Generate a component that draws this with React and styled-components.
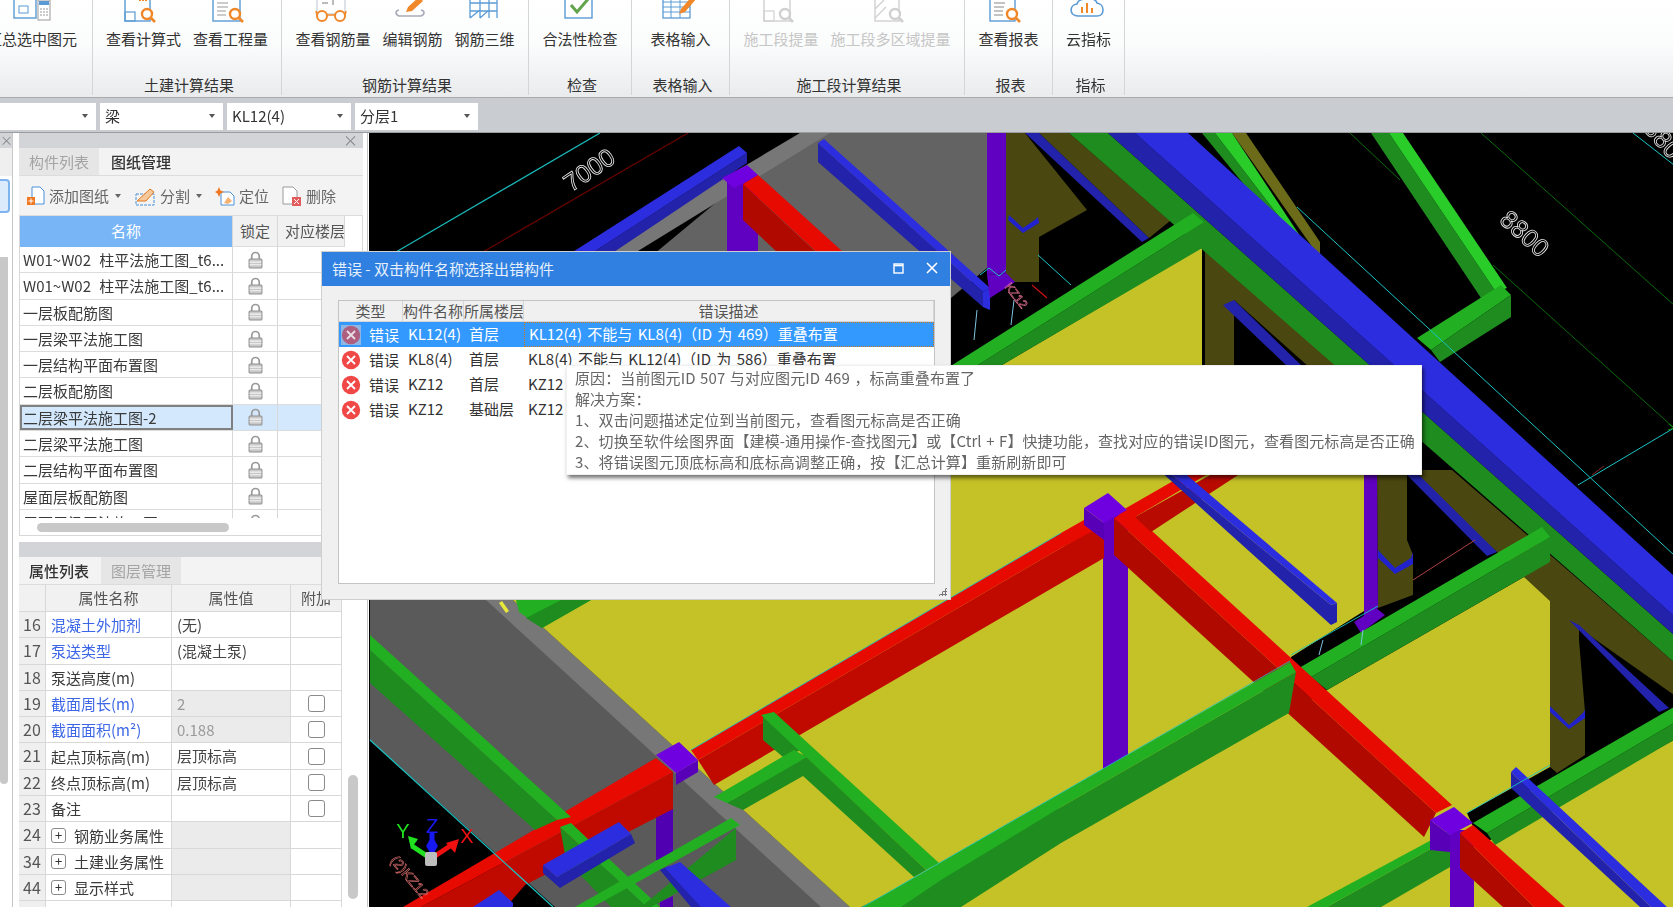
import React from 'react';
import styled, { createGlobalStyle } from 'styled-components';

const GlobalStyle = createGlobalStyle`
  html, body { margin: 0; padding: 0; background: #fff; overflow: hidden; }
  body { font-family: "Noto Sans CJK SC", "Noto Sans", sans-serif; font-size: 15px; color: #333; }
`;

const Page = styled.div`
  position: relative;
  width: 1673px;
  height: 907px;
  overflow: hidden;
  display: flex;
  flex-direction: column;
  filter: blur(0.3px);
`;

/* ---------- ribbon ---------- */
const Ribbon = styled.div`
  height: 97px;
  flex: none;
  display: flex;
  background: linear-gradient(#fff 0%, #fbfcfc 45%, #e9ebed 100%);
  border-bottom: 1px solid #a9abad;
`;
const Group = styled.div`
  flex: none;
  width: ${p => p.$w}px;
  height: 95px;
  display: flex;
  flex-direction: column;
  border-right: ${p => (p.$last ? 'none' : '1px solid #d3d5d7')};
  box-sizing: border-box;
`;
const GroupItems = styled.div`
  flex: 1;
  display: flex;
  gap: 12px;
  justify-content: ${p => p.$align || 'center'};
  padding-right: ${p => p.$pr || 0}px;
`;
const Item = styled.div`
  display: flex;
  flex-direction: column;
  align-items: center;
  white-space: nowrap;
  color: ${p => (p.$off ? '#c6c6c6' : '#333')};
`;
const IconSlot = styled.div`
  height: 29px;
  display: flex;
  align-items: flex-end;
  padding-bottom: 5px;
  box-sizing: border-box;
  overflow: hidden;
`;
const ItemLabel = styled.div`
  line-height: 20px;
`;
const GroupTitle = styled.div`
  height: 20px;
  line-height: 20px;
  padding-left: 4px;
  text-align: center;
  color: #333;
`;

/* ---------- combo bar ---------- */
const ComboBar = styled.div`
  height: 35px;
  flex: none;
  background: #c9ccd1;
  border-bottom: 1px solid #9a9c9f;
  box-sizing: border-box;
  display: flex;
  gap: 4px;
  padding-top: 5px;
  margin-left: -1px;
`;
const Combo = styled.div`
  width: ${p => p.$w}px;
  height: 27px;
  background: #fff;
  display: flex;
  align-items: center;
  padding: 0 8px 2px 5px;
  box-sizing: border-box;
  justify-content: space-between;
`;
const Caret = styled.span`
  width: 0;
  height: 0;
  border-left: 3.5px solid transparent;
  border-right: 3.5px solid transparent;
  border-top: 4px solid #555;
`;

/* ---------- left side ---------- */
const Main = styled.div`
  flex: 1;
  display: flex;
  min-height: 0;
`;
const Stub = styled.div`
  width: 12px;
  flex: none;
  border-right: 1px solid #c8c8c8;
  background: #fff;
  display: flex;
  flex-direction: column;
`;
const StubHead = styled.div`
  height: 15px;
  background: #d2d4d8;
  color: #888;
  font-size: 13px;
  line-height: 14px;
`;
const StubTabs = styled.div`
  height: 28px;
  background: #efefef;
`;
const StubBtn = styled.div`
  width: 10px;
  height: 34px;
  margin-top: 3px;
  box-sizing: border-box;
  border: 2px solid #7db4ee;
  border-left: none;
  border-radius: 0 4px 4px 0;
  background: #dcebfb;
`;
const StubThumb = styled.div`
  width: 8px;
  height: 527px;
  margin-top: 44px;
  background: #c8c8c8;
  border-radius: 0 0 4px 4px;
`;
const Side = styled.div`
  width: 349px;
  flex: none;
  margin-left: 6px;
  display: flex;
  flex-direction: column;
  position: relative;
`;
const PanelStrip = styled.div`
  height: 15px;
  flex: none;
  width: 344px;
  background: #d2d4d8;
  color: #8a8a8a;
  font-size: 15px;
  line-height: 14px;
  text-align: right;
  padding-right: 5px;
  box-sizing: border-box;
`;
const Tabs = styled.div`
  height: 28px;
  flex: none;
  width: 344px;
  display: flex;
  gap: 2px;
  background: #f3f3f3;
  border-bottom: 1px solid #dcdcdc;
  box-sizing: border-box;
`;
const Tab = styled.div`
  width: 80px;
  text-align: center;
  line-height: 27px;
  background: ${p => (p.$on ? '#f3f3f3' : '#e6e6e6')};
  color: ${p => (p.$on ? '#333' : '#a4a4a4')};
  font-weight: ${p => (p.$on ? 500 : 400)};
`;
const Toolbar = styled.div`
  height: 40px;
  flex: none;
  width: 344px;
  background: #f3f3f3;
  border-bottom: 1px solid #dcdcdc;
  box-sizing: border-box;
  display: flex;
  align-items: center;
  gap: 13px;
  padding-left: 8px;
  color: #666;
`;
const Tool = styled.div`
  display: flex;
  align-items: center;
  gap: 4px;
`;
const SmallCaret = styled(Caret)`
  border-top-color: #666;
  margin-left: 2px;
`;
const DrawingTable = styled.div`
  height: 320px;
  flex: none;
  width: 344px;
  box-sizing: border-box;
  border: 1px solid #d8d8d8;
  border-top: none;
  border-left-width: 1px;
  position: relative;
  overflow: hidden;
`;
const DrawingHead = styled.div`
  display: grid;
  grid-template-columns: 213px 45px 67px;
  height: 31px;
  line-height: 30px;
  text-align: center;
  color: #555;
`;
const HeadBlue = styled.div`
  background: #78b5f7;
  color: #fff;
  border-right: 1px solid #d8d8d8;
`;
const HeadCell = styled.div`
  background: #f1f1f1;
  border-bottom: 1px solid #dcdcdc;
  border-right: 1px solid #d8d8d8;
  white-space: nowrap;
  overflow: hidden;
  padding-left: ${p => p.$pl || 0}px;
`;
const DrawingRows = styled.div`
  height: 271px;
  overflow: hidden;
`;
const DrawingRow = styled.div`
  display: grid;
  grid-template-columns: 213px 45px 1fr;
  height: 26.3px;
  box-sizing: border-box;
  border-bottom: 1px solid #dcdcdc;
  background: ${p => (p.$on ? '#d3e8fc' : '#fff')};
`;
const NameCell = styled.div`
  padding-left: 3px;
  line-height: 25px;
  white-space: nowrap;
  overflow: hidden;
  word-spacing: 5px;
  border-right: 1px solid #d8d8d8;
  color: #3a3a3a;
  box-sizing: border-box;
  outline: ${p => (p.$on ? '2px solid #808080' : 'none')};
  outline-offset: -2px;
`;
const LockCell = styled.div`
  display: flex;
  align-items: center;
  justify-content: center;
  border-right: 1px solid #d8d8d8;
`;
const HScroll = styled.div`
  width: 192px;
  height: 9px;
  margin: 5px 0 0 17px;
  background: #c8c8c8;
  border-radius: 5px;
`;
const PanelGap = styled.div`
  height: 6px;
  flex: none;
`;
const PropHead = styled.div`
  display: grid;
  grid-template-columns: 27px 126px 119px 51px;
  height: 27px;
  line-height: 25px;
  text-align: center;
  color: #555;
  background: #f1f1f1;
  width: 323px;
  flex: none;
  & > div { border-right: 1px solid #d8d8d8; border-bottom: 1px solid #d8d8d8; }
`;
const PropRow = styled.div`
  display: grid;
  grid-template-columns: 27px 126px 119px 51px;
  height: 26.3px;
  width: 323px;
  flex: none;
  & > div {
    border-right: 1px solid #d8d8d8;
    border-bottom: 1px solid #d8d8d8;
    box-sizing: border-box;
    line-height: 25px;
    white-space: nowrap;
    overflow: hidden;
  }
`;
const NumCell = styled.div`
  background: #efefef;
  color: #555;
  text-align: center;
  font-size: 16px;
`;
const PropName = styled.div`
  padding-left: 5px;
  display: flex;
  align-items: center;
  gap: 8px;
  color: ${p => (p.$link ? '#3c66e6' : '#3a3a3a')};
`;
const PropValue = styled.div`
  padding-left: 5px;
  background: ${p => (p.$ro ? '#ebebeb' : '#fff')};
  color: ${p => (p.$muted ? '#9a9a9a' : '#444')};
`;
const CheckCell = styled.div`
  display: flex;
  align-items: center;
  justify-content: center;
`;
const CheckBox = styled.span`
  width: 17px;
  height: 17px;
  border: 1px solid #8a8a8a;
  border-radius: 3px;
  box-sizing: border-box;
`;
const Expander = styled.span`
  width: 15px;
  height: 15px;
  flex: none;
  border: 1px solid #8a8a8a;
  border-radius: 3px;
  box-sizing: border-box;
  font-size: 13px;
  line-height: 12px;
  text-align: center;
  color: #333;
`;
const VScroll = styled.div`
  position: absolute;
  left: 329px;
  top: 642px;
  width: 10px;
  height: 124px;
  background: #c8c8c8;
  border-radius: 5px;
`;
const SideEdge = styled.div`
  width: 1px;
  flex: none;
  background: #c4c4c4;
  margin-left: -1px;
`;

/* ---------- scene ---------- */
const SceneBox = styled.div`
  flex: 1;
  margin-left: 1px;
  background: #000;
  overflow: hidden;
  & > svg { display: block; }
`;

/* ---------- error dialog ---------- */
const Dialog = styled.div`
  position: absolute;
  left: 322px;
  top: 252px;
  width: 628px;
  height: 347px;
  background: #f0f0f0;
  box-shadow: 0 0 0 1px #cfcfcf;
  display: flex;
  flex-direction: column;
`;
const DialogTitle = styled.div`
  height: 34px;
  flex: none;
  background: #2f80e0;
  color: #e6f0fc;
  padding: 0 12px 2px 10px;
  box-sizing: border-box;
  display: flex;
  align-items: center;
  justify-content: space-between;
`;
const TitleButtons = styled.div`
  display: flex;
  align-items: center;
  gap: 22px;
`;
const ErrorTable = styled.div`
  margin: 14px 15px 0 16px;
  height: 284px;
  box-sizing: border-box;
  border: 1px solid #c4c4c4;
  background: #fff;
`;
const ErrorHead = styled.div`
  display: grid;
  grid-template-columns: 64px 61px 60px 1fr;
  height: 20px;
  line-height: 19px;
  text-align: center;
  background: #f0f0f0;
  border-bottom: 1px solid #d6d6d6;
  color: #555;
  white-space: nowrap;
  & > div { border-right: 1px solid #d6d6d6; overflow: hidden; }
`;
const ErrorRow = styled.div`
  display: grid;
  grid-template-columns: 64px 61px 60px 1fr;
  height: 25px;
  line-height: 24px;
  white-space: nowrap;
  background: ${p => (p.$on ? '#3399ff' : '#fff')};
  color: ${p => (p.$on ? '#fff' : '#333')};
`;
const TypeCell = styled.div`
  display: flex;
  align-items: center;
  gap: 8px;
  padding-left: 2px;
`;
const PlainCell = styled.div`
  padding-left: 5px;
`;
const DescCell = styled.div`
  padding-left: 4px;
  box-sizing: border-box;
  word-spacing: 2px;
  border: ${p => (p.$on ? '1px dotted #c87a1c' : 'none')};
  line-height: ${p => (p.$on ? '22px' : '24px')};
`;
const Grip = styled.div`
  position: absolute;
  right: 3px;
  bottom: 3px;
  width: 9px;
  height: 9px;
  background:
    radial-gradient(circle, #777 1.2px, transparent 1.4px) 0 0 / 3px 3px;
  clip-path: polygon(100% 0, 100% 100%, 0 100%);
`;

/* ---------- tooltip ---------- */
const Tip = styled.div`
  position: absolute;
  left: 566px;
  top: 365px;
  width: 856px;
  height: 110px;
  box-sizing: border-box;
  background: #fff;
  color: #666;
  padding: 1px 0 0 8px;
  line-height: 21px;
  letter-spacing: 0.1px;
  word-spacing: 1px;
  white-space: nowrap;
  box-shadow: 2px 3px 4px rgba(0, 0, 0, 0.55);
  border: 1px solid #f0f0f0;
`;

function RibbonIcon({ kind }) {
  const blue = '#5b9bd5';
  const orange = '#f0882a';
  const gray = '#d0d0d0';
  const mag = (c) => (
    <>
      <circle cx="23" cy="14" r="5" fill="#fff" stroke={c} strokeWidth="2.4" />
      <path d="M27 18l4 4" stroke={c} strokeWidth="2.6" />
    </>
  );
  let body = null;
  if (kind === 'sum') {
    body = (
      <>
        <rect x="1" y="-6" width="22" height="24" fill="none" stroke={blue} strokeWidth="1.4" />
        <rect x="6" y="6" width="9" height="7" fill="none" stroke={blue} />
        <rect x="25" y="0" width="12" height="20" fill="#fff" stroke="#999" />
        <rect x="26" y="1" width="10" height="4" fill={blue} />
        <path d="M27 9h8M27 12h8M27 15h8" stroke="#999" strokeDasharray="2 1" />
      </>
    );
  } else if (kind === 'formula') {
    body = (
      <>
        <rect x="1" y="-8" width="25" height="29" fill="#fff" stroke={blue} strokeWidth="1.4" />
        <rect x="1" y="12" width="10" height="9" fill="none" stroke={blue} strokeWidth="1.2" />
        <path d="M15 -1h9" stroke={orange} strokeWidth="4" strokeDasharray="2 1" />
        {mag(orange)}
      </>
    );
  } else if (kind === 'amount') {
    body = (
      <>
        <rect x="1" y="-8" width="27" height="29" fill="#fff" stroke={blue} strokeWidth="1.4" />
        <path d="M5 3h11M5 7h11M5 11h9M5 15h9" stroke="#999" />
        {mag(orange)}
      </>
    );
  } else if (kind === 'glasses') {
    body = (
      <>
        <rect x="3" y="-8" width="28" height="22" fill="#fff" stroke="#b8c4d0" />
        <path d="M8 -1h6M8 3h6M19 -2v7" stroke="#777" />
        <circle cx="8" cy="16" r="5" fill="#fff" stroke={orange} strokeWidth="2" />
        <circle cx="26" cy="16" r="5" fill="#fff" stroke={orange} strokeWidth="2" />
        <path d="M13 15h8M3 15l-1-4M31 15l1-4" stroke={orange} strokeWidth="1.6" />
      </>
    );
  } else if (kind === 'edit') {
    body = (
      <>
        <path d="M6 10c-4 1-4 4 0 6h22c4-2 4-5 0-6" fill="none" stroke="#aab" strokeWidth="1.6" />
        <path d="M13 12l2-5 11-10 4 4-11 10z" fill={orange} />
      </>
    );
  } else if (kind === 'cage') {
    body = (
      <>
        <path d="M4 -6v24M14 -6v24M23 -6v24M31 -6v24M4 3l27 0M4 11h27M4 18l10-8M14 18l9-8" fill="none" stroke={blue} strokeWidth="1.3" />
      </>
    );
  } else if (kind === 'check') {
    body = (
      <>
        <rect x="4" y="-8" width="27" height="26" fill="#fff" stroke={blue} strokeWidth="1.4" />
        <path d="M10 5l6 7 12-14" fill="none" stroke="#62a44c" strokeWidth="3" />
      </>
    );
  } else if (kind === 'grid') {
    body = (
      <>
        <rect x="2" y="-6" width="27" height="24" fill="#fff" stroke={blue} strokeWidth="1.3" />
        <path d="M2 2h27M2 7h27M2 12h27M10 -6v24M19 -6v24" stroke={blue} />
        <path d="M18 14l2-5 12-14 4 3-12 14z" fill={orange} />
      </>
    );
  } else if (kind === 'stage') {
    body = (
      <>
        <rect x="2" y="-8" width="26" height="29" fill="#fff" stroke={gray} strokeWidth="1.4" />
        <rect x="2" y="11" width="10" height="10" fill="none" stroke={gray} strokeWidth="1.2" />
        {mag(gray)}
      </>
    );
  } else if (kind === 'area') {
    body = (
      <>
        <rect x="3" y="-8" width="24" height="29" fill="#fff" stroke={gray} strokeWidth="1.4" />
        <path d="M3 9l9-9M3 18l11-11" stroke={gray} strokeWidth="1.4" />
        {mag(gray)}
      </>
    );
  } else if (kind === 'report') {
    body = (
      <>
        <rect x="1" y="-8" width="25" height="29" fill="#fff" stroke={blue} strokeWidth="1.4" />
        <path d="M5 3h11M5 7h10M5 11h9M5 15h9" stroke="#888" />
        {mag(orange)}
      </>
    );
  } else if (kind === 'cloud') {
    body = (
      <>
        <path d="M9 16c-9 0-9-11-1-12 1-6 18-8 20-1 8 1 8 13 0 13z" fill="#fff" stroke={blue} strokeWidth="1.6" />
        <path d="M13 7v6M18 3v10M23 8v5" stroke={orange} strokeWidth="2" />
      </>
    );
  }
  return (
    <svg width="38" height="24" viewBox="0 0 38 24" style={{ overflow: 'visible' }}>
      {body}
    </svg>
  );
}

function Lock() {
  return (
    <svg width="15" height="18" viewBox="0 0 14 16">
      <path d="M3.5 7V4.500a3.500 3.500 0 0 1 7 0V7" fill="none" stroke="#9a9a9a" strokeWidth="1.6" />
      <rect x="1" y="7" width="12" height="8.500" rx="1" fill="#c8c8c8" stroke="#8f8f8f" />
      <path d="M1.500 10h11M1.500 12.500h11" stroke="#f4f4f4" />
    </svg>
  );
}

function ErrorIcon({ on }) {
  return (
    <svg width="20" height="20" viewBox="0 0 20 20" style={{ flex: 'none', background: on ? '#8fb6e2' : 'none' }}>
      <circle cx="10" cy="10" r="9.2" fill={on ? '#ae5f7f' : '#f04747'} />
      <path d="M6 6l8 8M14 6l-8 8" stroke={on ? '#e8dfe6' : '#fff'} strokeWidth="1.8" />
    </svg>
  );
}

function ToolIcon({ kind }) {
  if (kind === 'add') {
    return (
      <svg width="18" height="20" viewBox="0 0 18 20">
        <path d="M5 1h8l4 4v13H5z" fill="#fff" stroke="#4a90d9" />
        <rect x="0" y="11" width="8" height="8" fill="#f07820" />
        <path d="M4 12.500v5M1.500 15h5" stroke="#fff" />
      </svg>
    );
  }
  if (kind === 'split') {
    return (
      <svg width="22" height="20" viewBox="0 0 22 20">
        <path d="M2 8h18v11H2z" fill="none" stroke="#4a90d9" strokeDasharray="3 1" />
        <path d="M3 15L16 3l4 3-8 9z" fill="#f6c89a" stroke="#e07a20" />
      </svg>
    );
  }
  if (kind === 'locate') {
    return (
      <svg width="20" height="20" viewBox="0 0 20 20">
        <path d="M6 6h9l4 4v9H6z" fill="#fff" stroke="#4a90d9" />
        <path d="M4 1l1.500 3.500L9 6 5.500 7.500 4 11 2.500 7.500 0 6l2.500-1.500z" fill="#f07820" />
        <path d="M9 17l4-6 4 4-4 3z" fill="#f6b070" />
      </svg>
    );
  }
  return (
    <svg width="20" height="20" viewBox="0 0 20 20">
      <path d="M1 1h10l4 4v13H1z" fill="#fff" stroke="#9a9a9a" />
      <rect x="10" y="11" width="9" height="9" fill="#e25c5c" />
      <path d="M12 13l5 5M17 13l-5 5" stroke="#fff" />
    </svg>
  );
}

const SHAPES = [
  // back slabs
  ['#636363', '799,133 986,133 986,268 950,298 600,298'],
  ['#777777', '799,133 829,133 598,275 560,275'],
  ['#5a5a5a', '369,600 512,600 849,907 554,907 369,740'],
  ['#777777', '485,600 512,600 849,907 820,907'],
  // olive walls and columns
  ['#4a4710', '1005,133 1024,133 1086,210 1038,237 1038,282 1005,282'],
  ['#4a4710', '1038,133 1068,133 1169,221 1148,238'],
  ['#2222aa', '1024,133 1038,133 1148,238 1141,242'],
  ['#4a4710', '1204,222 1400,396 1345,400 1233,300 1233,365 1204,365'],
  ['#2222aa', '1222,305 1233,300 1300,365 1285,365'],
  ['#6b6b1a', '1231,133 1245,133 1319,242 1319,258'],
  ['#1e8c1e', '1201,133 1214,133 1296,240 1280,230'],
  ['#2acc2a', '1214,133 1231,133 1305,245 1296,240'],
  // yellow floor
  ['#c4c226', '512,600 1001,365 1201,247 1201,470 1363,470 1363,611 1290,657 1288,713 1326,690 1549,562 1549,767 1466,813 1480,845 1673,740 1673,907 849,907'],
  // far beams
  ['#4a4710', '1376,470 1406,470 1406,540 1412,555 1412,595 1377,608'],
  ['#6000c0', '1363,470 1376,470 1377,608 1363,617'],
  ['#4a4710', '1405,470 1451,470 1673,662 1673,695 1578,628 1496,552'],
  ['#2222aa', '1406,475 1418,475 1496,552 1486,556'],
  ['#2222cc', '1377,550 1394,568 1410,558 1412,552 1412,564 1394,574 1377,558'],
  ['#4a4710', '1549,562 1578,585 1578,640 1584,712 1584,755 1556,773 1549,767'],
  ['#2222aa', '1568,620 1578,625 1668,708 1658,712'],
  ['#2222cc', '1549,706 1568,725 1582,713 1584,710 1584,718 1568,729 1549,712'],
  ['#6000c0', '1353,622 1375,608 1384,615 1360,633'],
  // top right thin green
  ['#1e8c1e', '1370,133 1388,133 1495,292 1480,298'],
  ['#2acc2a', '1388,133 1402,133 1506,288 1495,292'],
  ['#22b022', '1416,338 1500,285 1510,295 1430,350'],
  ['#1e8c1e', '1430,350 1510,295 1510,317 1439,362'],
  // green beam with blue beam over it
  ['#1e8c1e', '1068,133 1107,133 1673,635 1673,662'],
  ['#2222aa', '1107,133 1134,133 1673,616 1673,635'],
  ['#2d2de0', '1134,133 1187,133 1673,576 1673,616'],
  // horizontal green H1
  ['#1e8c1e', '890,420 1203,222 1203,247 1001,365 900,430'],
  ['#22b022', '880,410 1192,213 1203,222 890,420'],
  // blue pieces upper left
  ['#2222aa', '817,143 982,292 982,307 817,162'],
  ['#2d2de0', '817,143 823,139 989,288 982,292'],
  ['#2d2de0', '989,288 989,310 982,307 982,292'],
  ['#6000c0', '986,133 1005,133 1005,273 986,275'],
  ['#6000c0', '986,275 1005,273 1014,282 989,298'],
  ['#2222cc', '1008,215 1022,228 1035,219 1037,217 1038,223 1022,233 1007,220'],
  ['#6000c0', '726,180 757,175 757,260 726,260'],
  ['#2222aa', '746,153 746,163 598,262 577,262'],
  ['#2d2de0', '556,262 738,146 746,153 577,262'],
  ['#6f00e0', '721,178 746,165 757,175 733,188'],
  ['#b00a00', '742,184 742,220 776,252 815,270 842,270 815,252'],
  ['#e60a00', '742,184 757,175 842,252 860,270 835,270'],
  // H4 / H6 / H5 green
  ['#1e8c1e', '1310,677 1549,537 1549,562 1326,690'],
  ['#22b022', '1298,668 1541,527 1549,537 1310,677'],
  ['#1e8c1e', '1326,907 1449,838 1449,867 1380,907'],
  ['#22b022', '1306,907 1449,830 1449,838 1326,907'],
  ['#1e8c1e', '1486,833 1673,723 1673,740 1494,845'],
  ['#22b022', '1472,823 1673,707 1673,723 1486,833'],
  // purple columns
  ['#6000c0', '1102,515 1127,515 1127,760 1102,772'],
  ['#6000c0', '1449,830 1473,830 1473,907 1449,907'],
  ['#5000b0', '655,810 672,800 672,860 655,860'],
  ['#5000b0', '659,902 672,896 672,907 659,907'],
  // long red beam R1
  ['#b00a00', '1113,518 1435,813 1423,837 1113,555'],
  ['#e60a00', '1128,510 1451,805 1435,813 1113,518'],
  ['#b00a00', '1459,833 1533,907 1502,907 1459,868'],
  ['#e60a00', '1472,825 1564,907 1533,907 1459,833'],
  // H3 green ends over the red beam
  ['#1e8c1e', '860,907 1060,807 1295,672 1288,713 1060,843 960,907'],
  ['#22b022', '862,907 1060,793 1289,662 1295,672 1060,807 940,880 900,907'],
  // cross red beam R2
  ['#c00a00', '697,760 1060,548 1103,523 1103,558 1060,583 713,785'],
  ['#e60a00', '690,750 1060,533 1090,516 1103,525 1060,548 697,760'],
  ['#b80a00', '1134,517 1236,460 1260,460 1150,532'],
  ['#e60a00', '1113,515 1200,465 1222,465 1134,517'],
  ['#c00a00', '420,907 672,772 672,809 524,885 505,907'],
  ['#e60a00', '402,907 655,758 672,772 420,907'],
  // caps
  ['#5800b8', '1083,508 1103,523 1103,540 1083,525'],
  ['#6f00e0', '1083,508 1107,493 1126,510 1103,523'],
  ['#5800b8', '1429,820 1449,835 1449,852 1429,850'],
  ['#6f00e0', '1429,820 1453,807 1472,823 1449,835'],
  ['#5800b8', '697,760 697,772 675,785 675,773'],
  ['#6f00e0', '655,755 678,742 697,760 675,773'],
  // lower left green and blue
  ['#1e8c1e', '369,650 556,820 534,830 369,683'],
  ['#22b022', '369,635 570,817 556,820 369,650'],
  ['#1e8c1e', '559,827 646,907 610,907 565,860'],
  ['#22b022', '559,827 570,823 659,907 646,907'],
  ['#1e8c1e', '735,828 735,860 650,907 640,907'],
  ['#22b022', '574,907 730,818 739,825 592,907'],
  ['#22b022', '515,600 590,600 541,628 518,612'],
  ['#1e8c1e', '525,618 541,628 590,600 560,600'],
  ['#2222aa', '542,865 556,877 630,834 634,843 559,888 542,873'],
  ['#2d2de0', '542,865 618,822 630,834 556,877'],
  ['#2222aa', '659,870 690,907 712,907 668,866'],
  ['#2d2de0', '664,868 679,862 730,907 700,907'],
  ['#2d2de0', '472,907 498,890 512,903 512,907'],
  // yellow tick, small diagonal green
  ['#e8e83c', '498,603 501,601 508,611 505,613'],
  ['#1e8c1e', '762,717 762,740 782,757 800,750'],
  ['#22b022', '760,715 773,712 938,863 925,870'],
  ['#1e8c1e', '802,754 802,776 913,877 925,870'],
  ['#1e8c1e', '726,803 802,758 802,776 742,810'],
  ['#22b022', '713,797 793,750 806,757 726,803'],
  // blue tags over the floor
  ['#2222aa', '1158,470 1165,470 1330,605 1336,603 1336,622 1330,625'],
  ['#2d2de0', '1165,470 1180,470 1336,603 1330,605'],
  ['#2222aa', '1510,772 1650,907 1639,907 1510,788'],
  ['#2d2de0', '1510,772 1515,767 1666,907 1650,907']
];

const LINES = [
  ['#19b8b8', '599,133 395,252', 1.3],
  ['#6a0000', '687,133 482,252', 1.2],
  ['#19c4c4', '1296,207 1673,555', 1],
  ['#19c4c4', '1632,133 1673,165', 1],
  ['#0a6a0a', '1349,133 1399,180', 1],
  ['#0a6a0a', '1480,133 1673,305', 1],
  ['#0a6a0a', '1492,265 1673,428', 1],
  ['#19c4c4', '1673,428 1577,485', 1],
  ['#8a2a2a', '1591,475 1603,466', 1],
  ['#19c4c4', '369,740 552,907', 1.2],
  ['#19c4c4', '690,750 1060,533', 0.9],
  ['#19c4c4', '862,907 1060,793 1289,661', 0.8],
  ['#19c4c4', '1290,655 1377,606', 0.9],
  ['#19c4c4', '1466,813 1549,765', 0.9],
  ['#19c4c4', '1037,255 1070,285', 1],
  ['#d01010', '1031,285 1046,298', 1.2],
  ['#7fc4e0', '976,310 973,340', 1],
  ['#7fc4e0', '1013,300 1010,325', 1],
  ['#7fc4e0', '1322,640 1318,655', 1],
  ['#7fc4e0', '1362,630 1360,645', 1],
  ['#b04040', '1412,580 1474,540', 1],
  ['#19c4c4', '979,275 988,268 998,276 1005,270', 1]
];

function Scene() {
  return (
    <svg width="1305" height="774" viewBox="368 133 1305 774">
      {SHAPES.map((s, i) => (
        <polygon key={i} fill={s[0]} points={s[1]} />
      ))}
      {LINES.map((l, i) => (
        <polyline key={i} fill="none" stroke={l[0]} strokeWidth={l[2]} points={l[1]} />
      ))}
      <text x="0" y="0" transform="translate(593 177) rotate(-34)" fontSize="25" textAnchor="middle" fill="#000" stroke="#eee" strokeWidth="0.8" fontFamily="Liberation Sans, sans-serif">7000</text>
      <text x="0" y="0" transform="translate(1518 240) rotate(42)" fontSize="25" textAnchor="middle" fill="#000" stroke="#eee" strokeWidth="0.8" fontFamily="Liberation Sans, sans-serif">8800</text>
      <text x="0" y="0" transform="translate(1660 150) rotate(48)" fontSize="25" textAnchor="middle" fill="#000" stroke="#eee" strokeWidth="0.8" fontFamily="Liberation Sans, sans-serif">8800</text>
      <text x="0" y="0" transform="translate(1012 298) rotate(52)" fontSize="12" textAnchor="middle" fill="none" stroke="#e07090" strokeWidth="0.6" fontFamily="Liberation Sans, sans-serif">KZ12</text>
      <text x="0" y="0" transform="translate(405 880) rotate(50)" fontSize="14" textAnchor="middle" fill="none" stroke="#e07070" strokeWidth="0.6" fontFamily="Liberation Sans, sans-serif">(2)KZ12</text>
      {/* axis gizmo */}
      <text x="402" y="838" fontSize="20" fill="#20e020" textAnchor="middle" fontFamily="Liberation Sans, sans-serif">Y</text>
      <text x="431" y="833" fontSize="20" fill="#1818f0" textAnchor="middle" fontFamily="Liberation Sans, sans-serif">Z</text>
      <text x="466" y="843" fontSize="20" fill="#f01010" textAnchor="middle" fontFamily="Liberation Sans, sans-serif">X</text>
      <path d="M429 858l-18-12" stroke="#20e020" strokeWidth="5" />
      <path d="M407 836l10 3-7 10z" fill="#20e020" />
      <path d="M431 858v-26" stroke="#1818f0" strokeWidth="5" />
      <path d="M431 836l6 10-6 10-6-10z" fill="#1818f0" />
      <path d="M431 858l18-12" stroke="#f01010" strokeWidth="5" />
      <path d="M458 839l-4 14-9-10z" fill="#f01010" />
      <rect x="424" y="852" width="12" height="14" rx="2" fill="#bdbdbd" />
      <path d="M1668 424l5 4-6 2" fill="none" stroke="#0a9a0a" />
    </svg>
  );
}

const RIBBON = [
  { w: 93, title: '', align: 'flex-end', pr: 15, items: [['汇总选中图元', 'sum']] },
  { w: 189, title: '土建计算结果', items: [['查看计算式', 'formula'], ['查看工程量', 'amount']] },
  { w: 247, title: '钢筋计算结果', items: [['查看钢筋量', 'glasses'], ['编辑钢筋', 'edit'], ['钢筋三维', 'cage']] },
  { w: 103, title: '检查', items: [['合法性检查', 'check']] },
  { w: 98, title: '表格输入', items: [['表格输入', 'grid']] },
  { w: 235, title: '施工段计算结果', items: [['施工段提量', 'stage', true], ['施工段多区域提量', 'area', true]] },
  { w: 88, title: '报表', items: [['查看报表', 'report']] },
  { w: 72, title: '指标', items: [['云指标', 'cloud']] }
];

const DRAWINGS = [
  'W01~W02 柱平法施工图_t6...',
  'W01~W02 柱平法施工图_t6...',
  '一层板配筋图',
  '一层梁平法施工图',
  '一层结构平面布置图',
  '二层板配筋图',
  '二层梁平法施工图-2',
  '二层梁平法施工图',
  '二层结构平面布置图',
  '屋面层板配筋图',
  '屋面层梁平法施工图'
];

const PROPS = [
  { n: 16, name: '混凝土外加剂', value: '(无)', link: true },
  { n: 17, name: '泵送类型', value: '(混凝土泵)', link: true },
  { n: 18, name: '泵送高度(m)', value: '' },
  { n: 19, name: '截面周长(m)', value: '2', link: true, ro: true, check: true },
  { n: 20, name: '截面面积(m²)', value: '0.188', link: true, ro: true, check: true },
  { n: 21, name: '起点顶标高(m)', value: '层顶标高', check: true },
  { n: 22, name: '终点顶标高(m)', value: '层顶标高', check: true },
  { n: 23, name: '备注', value: '', check: true },
  { n: 24, name: '钢筋业务属性', group: true },
  { n: 34, name: '土建业务属性', group: true },
  { n: 44, name: '显示样式', group: true }
];

const ERRORS = [
  ['KL12(4)', '首层', 'KL12(4) 不能与 KL8(4)（ID 为 469）重叠布置'],
  ['KL8(4)', '首层', 'KL8(4) 不能与 KL12(4)（ID 为 586）重叠布置'],
  ['KZ12', '首层', 'KZ12'],
  ['KZ12', '基础层', 'KZ12']
];

export default function App() {
  return (
    <Page>
      <GlobalStyle />
      <Ribbon>
        {RIBBON.map((g, i) => (
          <Group key={i} $w={g.w}>
            <GroupItems $align={g.align} $pr={g.pr}>
              {g.items.map((it) => (
                <Item key={it[0]} $off={it[2]}>
                  <IconSlot><RibbonIcon kind={it[1]} /></IconSlot>
                  <ItemLabel>{it[0]}</ItemLabel>
                </Item>
              ))}
            </GroupItems>
            <GroupTitle>{g.title}</GroupTitle>
          </Group>
        ))}
      </Ribbon>

      <ComboBar>
        <Combo $w={97}><span /><Caret /></Combo>
        <Combo $w={123}><span>梁</span><Caret /></Combo>
        <Combo $w={124}><span>KL12(4)</span><Caret /></Combo>
        <Combo $w={123}><span>分层1</span><Caret /></Combo>
      </ComboBar>

      <Main>
        <Stub>
          <StubHead>×</StubHead>
          <StubTabs />
          <StubBtn />
          <StubThumb />
        </Stub>
        <Side>
          <PanelStrip>×</PanelStrip>
          <Tabs>
            <Tab>构件列表</Tab>
            <Tab $on>图纸管理</Tab>
          </Tabs>
          <Toolbar>
            <Tool><ToolIcon kind="add" />添加图纸<SmallCaret /></Tool>
            <Tool><ToolIcon kind="split" />分割<SmallCaret /></Tool>
            <Tool><ToolIcon kind="locate" />定位</Tool>
            <Tool><ToolIcon kind="delete" />删除</Tool>
          </Toolbar>
          <DrawingTable>
            <DrawingHead>
              <HeadBlue>名称</HeadBlue>
              <HeadCell>锁定</HeadCell>
              <HeadCell $pl={7}>对应楼层</HeadCell>
            </DrawingHead>
            <DrawingRows>
              {DRAWINGS.map((d, i) => (
                <DrawingRow key={i} $on={i === 6}>
                  <NameCell $on={i === 6}>{d}</NameCell>
                  <LockCell><Lock /></LockCell>
                  <div />
                </DrawingRow>
              ))}
            </DrawingRows>
            <HScroll />
          </DrawingTable>
          <PanelGap />
          <PanelStrip />
          <Tabs>
            <Tab $on>属性列表</Tab>
            <Tab>图层管理</Tab>
          </Tabs>
          <PropHead>
            <div />
            <div>属性名称</div>
            <div>属性值</div>
            <div>附加</div>
          </PropHead>
          {PROPS.map((p) => (
            <PropRow key={p.n}>
              <NumCell>{p.n}</NumCell>
              <PropName $link={p.link}>
                {p.group && <Expander>+</Expander>}
                {p.name}
              </PropName>
              <PropValue $ro={p.ro || p.group} $muted={p.ro}>{p.value}</PropValue>
              <CheckCell>{p.check && <CheckBox />}</CheckCell>
            </PropRow>
          ))}
          <PropRow>
            <NumCell />
            <div />
            <div />
            <div />
          </PropRow>
          <VScroll />
        </Side>
        <SideEdge />
        <SceneBox>
          <Scene />
        </SceneBox>
      </Main>

      <Dialog>
        <DialogTitle>
          <span>错误 - 双击构件名称选择出错构件</span>
          <TitleButtons>
            <svg width="11" height="11" viewBox="0 0 11 11">
              <rect x="1" y="1" width="9" height="9" fill="none" stroke="#fff" strokeWidth="1.4" />
              <path d="M1 2.500h9" stroke="#fff" strokeWidth="1.6" />
            </svg>
            <svg width="12" height="12" viewBox="0 0 12 12">
              <path d="M1 1l10 10M11 1L1 11" stroke="#fff" strokeWidth="1.6" />
            </svg>
          </TitleButtons>
        </DialogTitle>
        <ErrorTable>
          <ErrorHead>
            <div>类型</div>
            <div>构件名称</div>
            <div>所属楼层</div>
            <div>错误描述</div>
          </ErrorHead>
          {ERRORS.map((e, i) => (
            <ErrorRow key={i} $on={i === 0}>
              <TypeCell><ErrorIcon on={i === 0} />错误</TypeCell>
              <PlainCell>{e[0]}</PlainCell>
              <PlainCell>{e[1]}</PlainCell>
              <DescCell $on={i === 0}>{e[2]}</DescCell>
            </ErrorRow>
          ))}
        </ErrorTable>
        <Grip />
      </Dialog>

      <Tip>
        <div>原因：当前图元ID 507 与对应图元ID 469 ，标高重叠布置了</div>
        <div>解决方案：</div>
        <div>1、双击问题描述定位到当前图元，查看图元标高是否正确</div>
        <div>2、切换至软件绘图界面【建模-通用操作-查找图元】或【Ctrl + F】快捷功能，查找对应的错误ID图元，查看图元标高是否正确</div>
        <div>3、将错误图元顶底标高和底标高调整正确，按【汇总计算】重新刷新即可</div>
      </Tip>
    </Page>
  );
}
